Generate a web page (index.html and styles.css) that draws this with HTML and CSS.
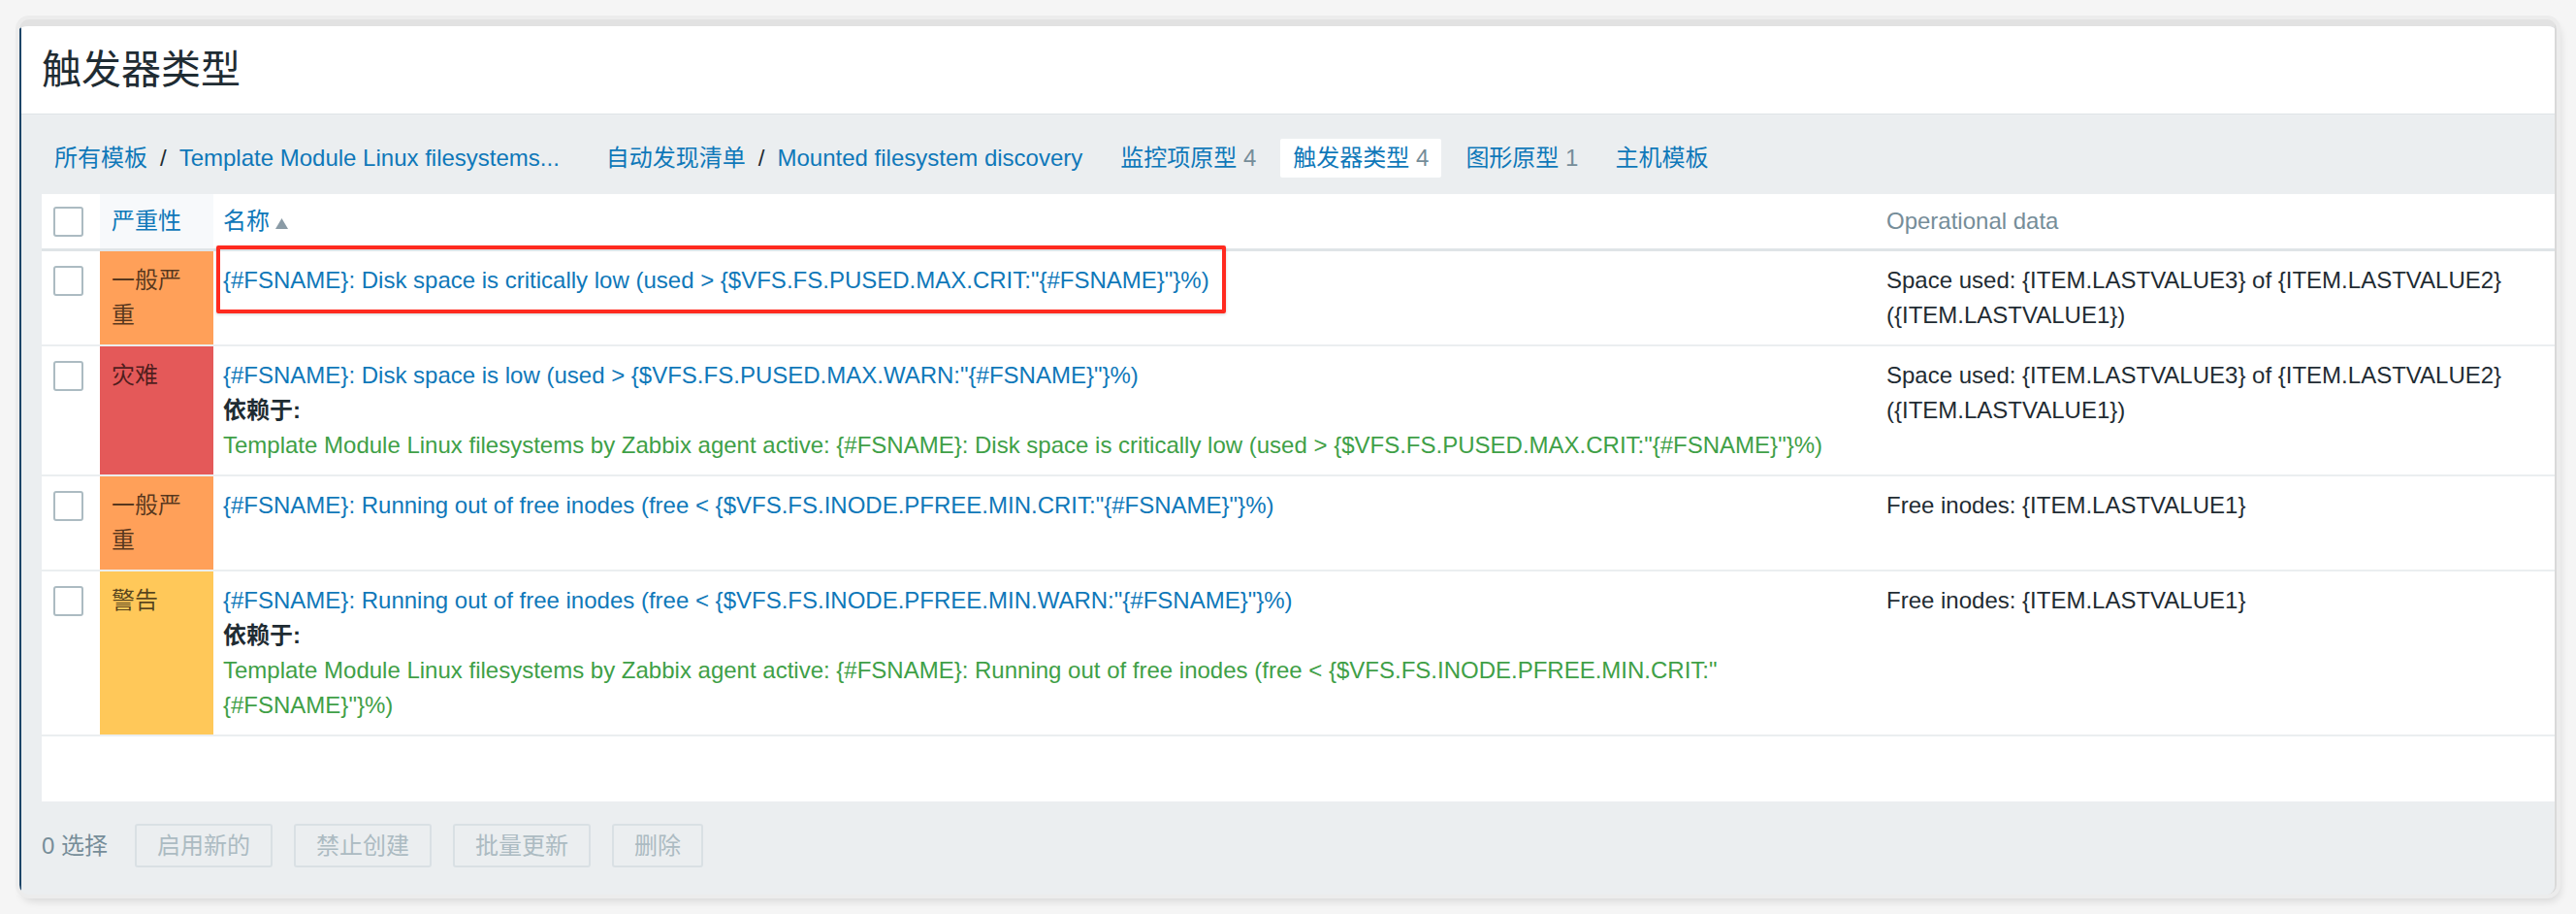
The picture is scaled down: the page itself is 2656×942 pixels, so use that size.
FILE: index.html
```html
<!DOCTYPE html>
<html lang="zh-CN">
<head>
<meta charset="utf-8">
<title>触发器类型</title>
<link rel="stylesheet" href="styles.css">
</head>
<body>
<div class="window">
  <div class="page">
    <header class="page-header">
      <h1 class="page-title">触发器类型</h1>
    </header>

    <nav class="object-nav">
      <ul class="crumbs">
        <li class="nav-item"><a class="link">所有模板</a></li>
        <li class="sep">/</li>
        <li class="nav-item"><a class="link">Template Module Linux filesystems...</a></li>
      </ul>
      <ul class="crumbs">
        <li class="nav-item"><a class="link">自动发现清单</a></li>
        <li class="sep">/</li>
        <li class="nav-item"><a class="link">Mounted filesystem discovery</a></li>
      </ul>
      <ul class="tabs">
        <li class="nav-item"><a class="link">监控项原型</a> <span class="count">4</span></li>
        <li class="nav-item active"><span class="link">触发器类型</span> <span class="count">4</span></li>
        <li class="nav-item"><a class="link">图形原型</a> <span class="count">1</span></li>
        <li class="nav-item"><a class="link">主机模板</a></li>
      </ul>
    </nav>

    <div class="panel">
      <table class="list">
        <colgroup>
          <col class="col-check">
          <col class="col-sev">
          <col class="col-name">
          <col>
        </colgroup>
        <thead>
          <tr>
            <th class="cell-check"><input type="checkbox" class="checkbox"></th>
            <th class="cell-sev-head"><a class="link">严重性</a></th>
            <th class="cell-name"><a class="link">名称</a><svg class="sort" width="13" height="11" viewBox="0 0 13 11"><path d="M6.5 0 13 11H0Z" fill="#8a9ba6"/></svg></th>
            <th class="muted">Operational data</th>
          </tr>
        </thead>
        <tbody>
          <tr>
            <td class="cell-check"><input type="checkbox" class="checkbox"></td>
            <td class="sev sev-high">一般严重</td>
            <td class="cell-name">
              <a class="link">{#FSNAME}: Disk space is critically low (used &gt; {$VFS.FS.PUSED.MAX.CRIT:"{#FSNAME}"}%)</a>
              <span class="highlight"></span>
            </td>
            <td>Space used: {ITEM.LASTVALUE3} of {ITEM.LASTVALUE2} ({ITEM.LASTVALUE1})</td>
          </tr>
          <tr>
            <td class="cell-check"><input type="checkbox" class="checkbox"></td>
            <td class="sev sev-disaster">灾难</td>
            <td class="cell-name">
              <a class="link block">{#FSNAME}: Disk space is low (used &gt; {$VFS.FS.PUSED.MAX.WARN:"{#FSNAME}"}%)</a>
              <div class="dep-label">依赖于:</div>
              <a class="dep block">Template Module Linux filesystems by Zabbix agent active: {#FSNAME}: Disk space is critically low (used &gt; {$VFS.FS.PUSED.MAX.CRIT:"{#FSNAME}"}%)</a>
            </td>
            <td>Space used: {ITEM.LASTVALUE3} of {ITEM.LASTVALUE2} ({ITEM.LASTVALUE1})</td>
          </tr>
          <tr>
            <td class="cell-check"><input type="checkbox" class="checkbox"></td>
            <td class="sev sev-high">一般严重</td>
            <td class="cell-name">
              <a class="link">{#FSNAME}: Running out of free inodes (free &lt; {$VFS.FS.INODE.PFREE.MIN.CRIT:"{#FSNAME}"}%)</a>
            </td>
            <td>Free inodes: {ITEM.LASTVALUE1}</td>
          </tr>
          <tr>
            <td class="cell-check"><input type="checkbox" class="checkbox"></td>
            <td class="sev sev-warning">警告</td>
            <td class="cell-name">
              <a class="link block">{#FSNAME}: Running out of free inodes (free &lt; {$VFS.FS.INODE.PFREE.MIN.WARN:"{#FSNAME}"}%)</a>
              <div class="dep-label">依赖于:</div>
              <a class="dep block">Template Module Linux filesystems by Zabbix agent active: {#FSNAME}: Running out of free inodes (free &lt; {$VFS.FS.INODE.PFREE.MIN.CRIT:"<wbr>{#FSNAME}"}%)</a>
            </td>
            <td>Free inodes: {ITEM.LASTVALUE1}</td>
          </tr>
        </tbody>
      </table>
    </div>

    <footer class="footer">
      <span class="selected">0 选择</span>
      <button class="btn" disabled>启用新的</button>
      <button class="btn" disabled>禁止创建</button>
      <button class="btn" disabled>批量更新</button>
      <button class="btn" disabled>删除</button>
    </footer>
  </div>
</div>
</body>
</html>
```

FILE: styles.css
```css
* {
  box-sizing: border-box;
}

html,
body {
  margin: 0;
}

body {
  width: 2656px;
  height: 942px;
  overflow: hidden;
  background: #f5f5f5;
  font-family: "Liberation Sans", "Noto Sans CJK SC", sans-serif;
  font-size: 24px;
  color: #1f2c33;
}

.window {
  margin: 20px 0 0 20px;
  width: 2616px;
  height: 902px;
  border-top: 7px solid #e2e2e2;
  border-right: 2px solid #d9d9d9;
  border-radius: 10px;
  overflow: hidden;
  background: #ebeef0;
  box-shadow: 0 0 0 4px #ececec, 3px 6px 10px rgba(0, 0, 0, 0.14);
}

.page {
  height: 100%;
  display: flex;
  flex-direction: column;
  border-left: 2px solid #1d4568;
  background: #ebeef0;
}

/* header */
.page-header {
  flex: none;
  height: 91px;
  display: flex;
  align-items: center;
  padding-left: 21px;
  background: #fff;
  border-bottom: 1px solid #dfe4e7;
}

.page-title {
  margin: 0;
  font-size: 41px;
  font-weight: 400;
  line-height: 1;
  color: #1f2c33;
}

/* navigation */
.object-nav {
  flex: none;
  display: flex;
  gap: 13px;
  padding: 25px 0 17px 21px;
}

.crumbs,
.tabs {
  list-style: none;
  margin: 0;
  padding: 0;
  display: flex;
}

.crumbs + .crumbs {
  margin-left: 9px;
}

.tabs {
  gap: 12px;
}

.nav-item {
  height: 40px;
  line-height: 40px;
  padding: 0 13px;
  white-space: nowrap;
}

.nav-item.active {
  background: #fff;
  border-radius: 2px;
}

.sep {
  line-height: 40px;
  color: #1f2c33;
}

.link {
  color: #0f78b9;
  text-decoration: none;
}

.count {
  color: #768d99;
}

/* table panel */
.panel {
  flex: none;
  margin-left: 21px;
  background: #fff;
  padding-bottom: 67px;
}

.list {
  width: 100%;
  border-collapse: collapse;
  table-layout: fixed;
}

.col-check {
  width: 60px;
}

.col-sev {
  width: 117px;
}

.col-name {
  width: 1713px;
}

.list th,
.list td {
  padding: 12px;
  line-height: 36px;
  text-align: left;
  vertical-align: top;
  font-weight: 400;
}

.list thead th {
  padding-top: 10px;
  padding-bottom: 10px;
  border-bottom: 3px solid #dfe4e7;
}

.list tbody tr {
  border-bottom: 2px solid #ebeef0;
}

.list .cell-name {
  padding-left: 10px;
  padding-right: 10px;
  position: relative;
}

.cell-sev-head {
  background: #f7f9fb;
}

.muted {
  color: #768d99;
}

.sort {
  margin-left: 6px;
  vertical-align: 0;
}

.checkbox {
  appearance: none;
  -webkit-appearance: none;
  display: block;
  margin: 3px 0 0;
  width: 31px;
  height: 31px;
  border: 2px solid #acbbc2;
  border-radius: 3px;
  background: #fff;
}

.sev {
  color: rgba(0, 0, 0, 0.66);
}

.sev-high {
  background: #ffa059;
}

.sev-disaster {
  background: #e45959;
}

.sev-warning {
  background: #ffc859;
}

.block {
  display: block;
}

.dep-label {
  font-weight: 700;
  color: #1f2c33;
}

.dep {
  color: #3fa047;
  text-decoration: none;
}

.highlight {
  position: absolute;
  top: -6px;
  left: 3px;
  width: 1041px;
  height: 70px;
  border: 4px solid #ff2a1f;
  border-radius: 2px;
  box-shadow: 0 1px 3px rgba(0, 0, 0, 0.18);
  pointer-events: none;
}

/* footer */
.footer {
  flex: 1;
  display: flex;
  align-items: flex-start;
  padding: 23px 0 0 21px;
}

.selected {
  line-height: 45px;
  color: #768d99;
  margin-right: 28px;
}

.btn {
  height: 45px;
  padding: 0 21px;
  margin-right: 22px;
  border: 2px solid #d9e0e4;
  border-radius: 3px;
  background: #ebeef0;
  color: #acbbc2;
  font: inherit;
  line-height: 41px;
}
```
